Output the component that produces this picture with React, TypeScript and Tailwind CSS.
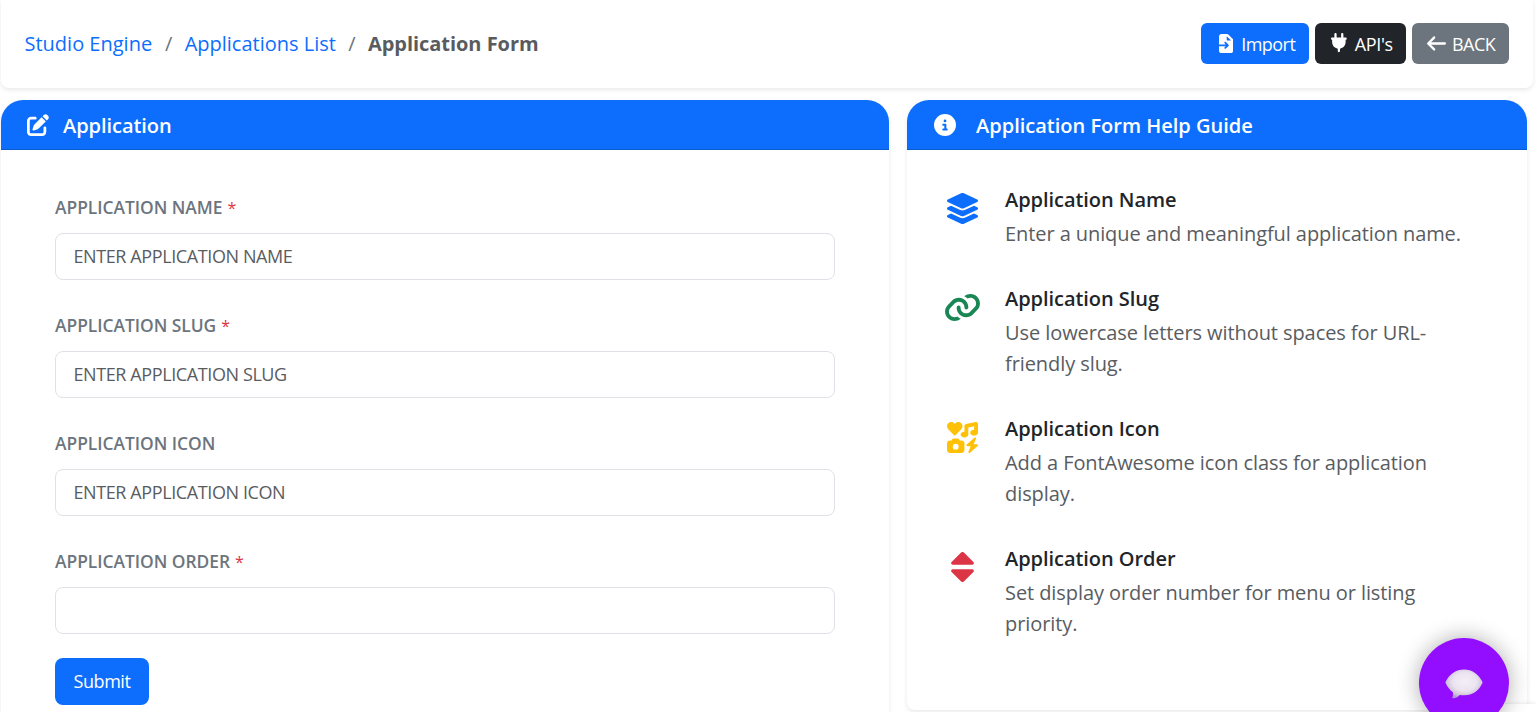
import React from "react";
import { FaPenToSquare, FaCircleInfo, FaLayerGroup, FaIcons } from "react-icons/fa6";

function ImportIcon() {
  return (
    <svg viewBox="0 0 384 512" className="h-[19px] w-[14.25px]" fill="currentColor">
      <path
        fillRule="evenodd"
        d="M64 0C28.7 0 0 28.7 0 64V280H183L151 249C141.600 239.600 141.600 224.400 151 215S175.600 205.600 185 215L257 287C266.400 296.400 266.400 311.600 257 321L185 393C175.600 402.400 160.400 402.400 151 393S141.600 368.400 151 359L183 328H0V448C0 483.300 28.700 512 64 512H320C355.300 512 384 483.300 384 448V170.500C384 153.500 377.300 137.200 365.300 125.200L258.700 18.700C246.700 6.700 230.500 0 213.500 0H64ZM325.500 176H232C218.700 176 208 165.300 208 152V58.500L325.500 176Z"
      />
    </svg>
  );
}

function PlugIcon() {
  return (
    <svg viewBox="0 -32 448 576" className="h-[20.250px] w-[15.750px]" fill="currentColor">
      <path d="M128-32c17.700 0 32 14.300 32 32l0 96 128 0 0-96c0-17.700 14.300-32 32-32s32 14.300 32 32l0 96 64 0c17.700 0 32 14.300 32 32s-14.300 32-32 32l0 64c0 95.100-69.200 174.100-160 189.300l0 66.700c0 17.700-14.300 32-32 32s-32-14.300-32-32l0-66.700C101.200 398.100 32 319.100 32 224l0-64c-17.700 0-32-14.300-32-32S14.300 96 32 96l64 0 0-96c0-17.700 14.300-32 32-32z" />
    </svg>
  );
}

function BackIcon() {
  return (
    <svg viewBox="0 0 512 512" className="size-[19px]" fill="currentColor">
      <path d="M9.400 233.400c-12.500 12.500-12.500 32.800 0 45.300l160 160c12.500 12.500 32.800 12.500 45.300 0s12.500-32.800 0-45.300L109.300 288 480 288c17.700 0 32-14.300 32-32s-14.300-32-32-32l-370.700 0 105.400-105.400c12.500-12.500 12.500-32.800 0-45.300s-32.800-12.500-45.300 0l-160 160z" />
    </svg>
  );
}

function LinkIcon() {
  return (
    <svg viewBox="0 0 576 512" className="h-[31px] w-[35px]" fill="currentColor">
      <path d="M419.5 96c-16.6 0-32.7 4.5-46.8 12.7-15.8-16-34.2-29.4-54.5-39.5 28.2-24 64.1-37.2 101.3-37.2 86.4 0 156.5 70 156.5 156.5 0 41.5-16.5 81.3-45.8 110.6l-71.1 71.1c-29.3 29.3-69.1 45.8-110.6 45.8-86.4 0-156.5-70-156.5-156.5 0-1.5 0-3 .1-4.5 .5-17.7 15.2-31.6 32.9-31.1s31.6 15.2 31.1 32.9c0 .9 0 1.8 0 2.6 0 51.1 41.4 92.5 92.5 92.5 24.5 0 48-9.7 65.4-27.1l71.1-71.1c17.3-17.3 27.1-40.9 27.1-65.4 0-51.1-41.4-92.5-92.5-92.5zM275.2 173.3c-1.900-.8-3.800-1.900-5.500-3.100-12.600-6.500-27-10.200-42.100-10.200-24.500 0-48 9.700-65.400 27.100L91.100 258.200c-17.300 17.300-27.100 40.900-27.100 65.400 0 51.100 41.400 92.500 92.500 92.500 16.500 0 32.600-4.400 46.700-12.600 15.800 16 34.200 29.400 54.600 39.500-28.200 23.900-64 37.200-101.300 37.200-86.400 0-156.500-70-156.500-156.500 0-41.500 16.500-81.300 45.800-110.600l71.100-71.100c29.300-29.300 69.100-45.800 110.600-45.800 86.600 0 156.500 70.600 156.500 156.900 0 1.300 0 2.600 0 3.900-.4 17.700-15.100 31.600-32.800 31.200s-31.600-15.100-31.200-32.800c0-.8 0-1.500 0-2.300 0-33.700-18-63.300-44.800-79.600z" />
    </svg>
  );
}

function SortIcon() {
  return (
    <svg viewBox="0 0 23 30" className="h-[30px] w-[23px]" fill="currentColor">
      <path d="M10.100.6a2 2 0 0 1 2.800 0L22.400 10a1.600 1.600 0 0 1-1.100 2.700H1.700A1.600 1.600 0 0 1 .6 10L10.100.6ZM10.100 29.400a2 2 0 0 0 2.800 0L22.400 20a1.600 1.600 0 0 0-1.100-2.700H1.700A1.600 1.600 0 0 0 .6 20l9.500 9.400Z" />
    </svg>
  );
}

function ChatBubble() {
  return (
    <svg viewBox="0 0 38 30" className="h-[30px] w-[38px]">
      <defs>
        <radialGradient id="bubble" cx="0.52" cy="0.42" r="0.58">
          <stop offset="0" stopColor="#f4eff6" />
          <stop offset="0.55" stopColor="#ebe4f0" />
          <stop offset="0.85" stopColor="#cfc3dc" />
          <stop offset="1" stopColor="#b09ccb" />
        </radialGradient>
      </defs>
      <path
        fill="url(#bubble)"
        d="M19 .5C27 .5 33.500 5 37.300 12.600a1.800 1.800 0 0 1 0 1.600C33.500 22 27.500 26.200 19.500 26.200c-1.800 0-3.400-.1-4.900-.3-1.300 1.800-3.500 3-6.300 3.400-.8.1-1.100-.5-.8-1.100.5-1.400.7-3.300.4-5C4.900 21 2.500 18 .7 14.200a1.800 1.800 0 0 1 0-1.600C4.500 5 11 .5 19 .5Z"
      />
    </svg>
  );
}

const fields = [
  { label: "APPLICATION NAME", placeholder: "ENTER APPLICATION NAME", required: true },
  { label: "APPLICATION SLUG", placeholder: "ENTER APPLICATION SLUG", required: true },
  { label: "APPLICATION ICON", placeholder: "ENTER APPLICATION ICON", required: false },
  { label: "APPLICATION ORDER", placeholder: "", required: true },
];

const tips = [
  { icon: <FaLayerGroup size={35} />, color: "text-[#0d6efd]", title: "Application Name", text: "Enter a unique and meaningful application name." },
  { icon: <LinkIcon />, color: "text-[#198754]", title: "Application Slug", text: "Use lowercase letters without spaces for URL-friendly slug." },
  { icon: <FaIcons size={31} />, color: "text-[#ffc107]", title: "Application Icon", text: "Add a FontAwesome icon class for application display." },
  { icon: <SortIcon />, color: "text-[#dc3545]", title: "Application Order", text: "Set display order number for menu or listing priority." },
];

export default function App() {
  return (
    <div className="relative h-[712px] w-full overflow-hidden bg-white font-['Open_Sans','Noto_Sans',sans-serif] text-[#212529]">
      <header className="ml-px flex h-[88px] w-[1532px] items-center justify-between rounded-b-lg bg-white pr-[24px] pl-[23.5px] shadow-[0_2px_5px_rgba(0,0,0,0.09)]">
        <nav className="flex items-center text-xl leading-[30px] whitespace-nowrap">
          <a className="text-[#0d6efd]">Studio Engine</a>
          <span className="w-8 pl-px text-center text-[#6c757d]">/</span>
          <a className="pl-[0.5px] text-[#0d6efd]">Applications List</a>
          <span className="w-8 text-center text-[#6c757d]">/</span>
          <span className="font-bold tracking-[-0.04px] text-[#595c5f]">Application Form</span>
        </nav>
        <div className="flex gap-1.5 pb-px text-lg whitespace-nowrap text-white">
          <button className="flex h-[41px] w-[108px] items-center gap-[8px] rounded-md bg-[#0d6efd] pl-[18px] tracking-[-0.55px]">
            <ImportIcon />
            Import
          </button>
          <button className="flex h-[41px] w-[91px] items-center gap-[8px] rounded-md bg-[#212529] pl-4 tracking-[-0.35px]">
            <PlugIcon />
            API's
          </button>
          <button className="flex h-[41px] w-[97px] items-center gap-[6px] rounded-md bg-[#6c757d] pl-[15px] tracking-[-0.55px]">
            <BackIcon />
            BACK
          </button>
        </div>
      </header>

      <main className="mt-3 ml-px flex items-start gap-[18px]">
        <section className="h-[640px] w-[888px] rounded-t-[22px] rounded-b-lg bg-white shadow-[0_2px_5px_rgba(0,0,0,0.09)]">
          <h5 className="flex h-[50px] items-center gap-3.5 rounded-t-[22px] border-b border-[#0b5bd1] bg-[#0d6efd] pl-[26px] text-xl font-semibold tracking-[-0.05px] text-white">
            <FaPenToSquare size={22} />
            <span className="pt-0.5">Application</span>
          </h5>
          <form className="px-[54px] pt-11">
            {fields.map((f) => (
              <div key={f.label} className="mb-6 h-[94px]">
                <label className="mb-[13px] block h-[26px] pt-px text-[17.4px] leading-[25px] font-semibold tracking-[-0.03px] text-[#6c757d]">
                  {f.label}
                  {f.required && <span className="ml-[5px] text-[16px] font-normal text-[#dc3545]">*</span>}
                </label>
                <input
                  placeholder={f.placeholder}
                  className="block h-[47px] w-[780px] rounded-lg border border-[#dee2e6] bg-white px-[17.5px] pb-0.5 text-lg tracking-[-0.4px] placeholder:text-[#595c5f] placeholder:opacity-100"
                />
              </div>
            ))}
            <button type="button" className="h-[47px] w-[94px] -translate-y-2 rounded-lg bg-[#0d6efd] pb-0.5 text-lg tracking-[-0.45px] text-white">
              Submit
            </button>
          </form>
        </section>

        <section className="h-[610px] w-[620px] rounded-t-[22px] rounded-b-lg bg-white shadow-[0_2px_5px_rgba(0,0,0,0.09)]">
          <h5 className="flex h-[50px] items-center gap-[20px] rounded-t-[22px] border-b border-[#0b5bd1] bg-[#0d6efd] pl-[27px] text-xl font-semibold text-white">
            <FaCircleInfo size={22} />
            <span className="pt-0.5">Application Form Help Guide</span>
          </h5>
          <div className="flex flex-col gap-[33.6px] pt-[34px] pl-[38px]">
            {tips.map((t) => (
              <div key={t.title} className="flex">
                <div className={"mt-[9px] flex h-[31px] w-[35px] items-center justify-center " + t.color}>{t.icon}</div>
                <div className="ml-[25px] w-[470px]">
                  <h6 className="mb-[3px] text-xl leading-[31px] font-semibold tracking-[-0.05px]">{t.title}</h6>
                  <p className="text-xl leading-[31.2px] tracking-[-0.08px] text-[#595c5f]">{t.text}</p>
                </div>
              </div>
            ))}
          </div>
        </section>
      </main>

      <div className="absolute top-[704px] right-0 h-2 w-[100px] bg-white shadow-[0_0_5px_rgba(0,0,0,0.12)]" />
      <button className="absolute top-[638px] left-[1419px] flex size-[90px] items-center justify-center rounded-full bg-[#930dff] pt-0.5 shadow-[0_0_22px_rgba(0,0,0,0.33)]">
        <ChatBubble />
      </button>
    </div>
  );
}
